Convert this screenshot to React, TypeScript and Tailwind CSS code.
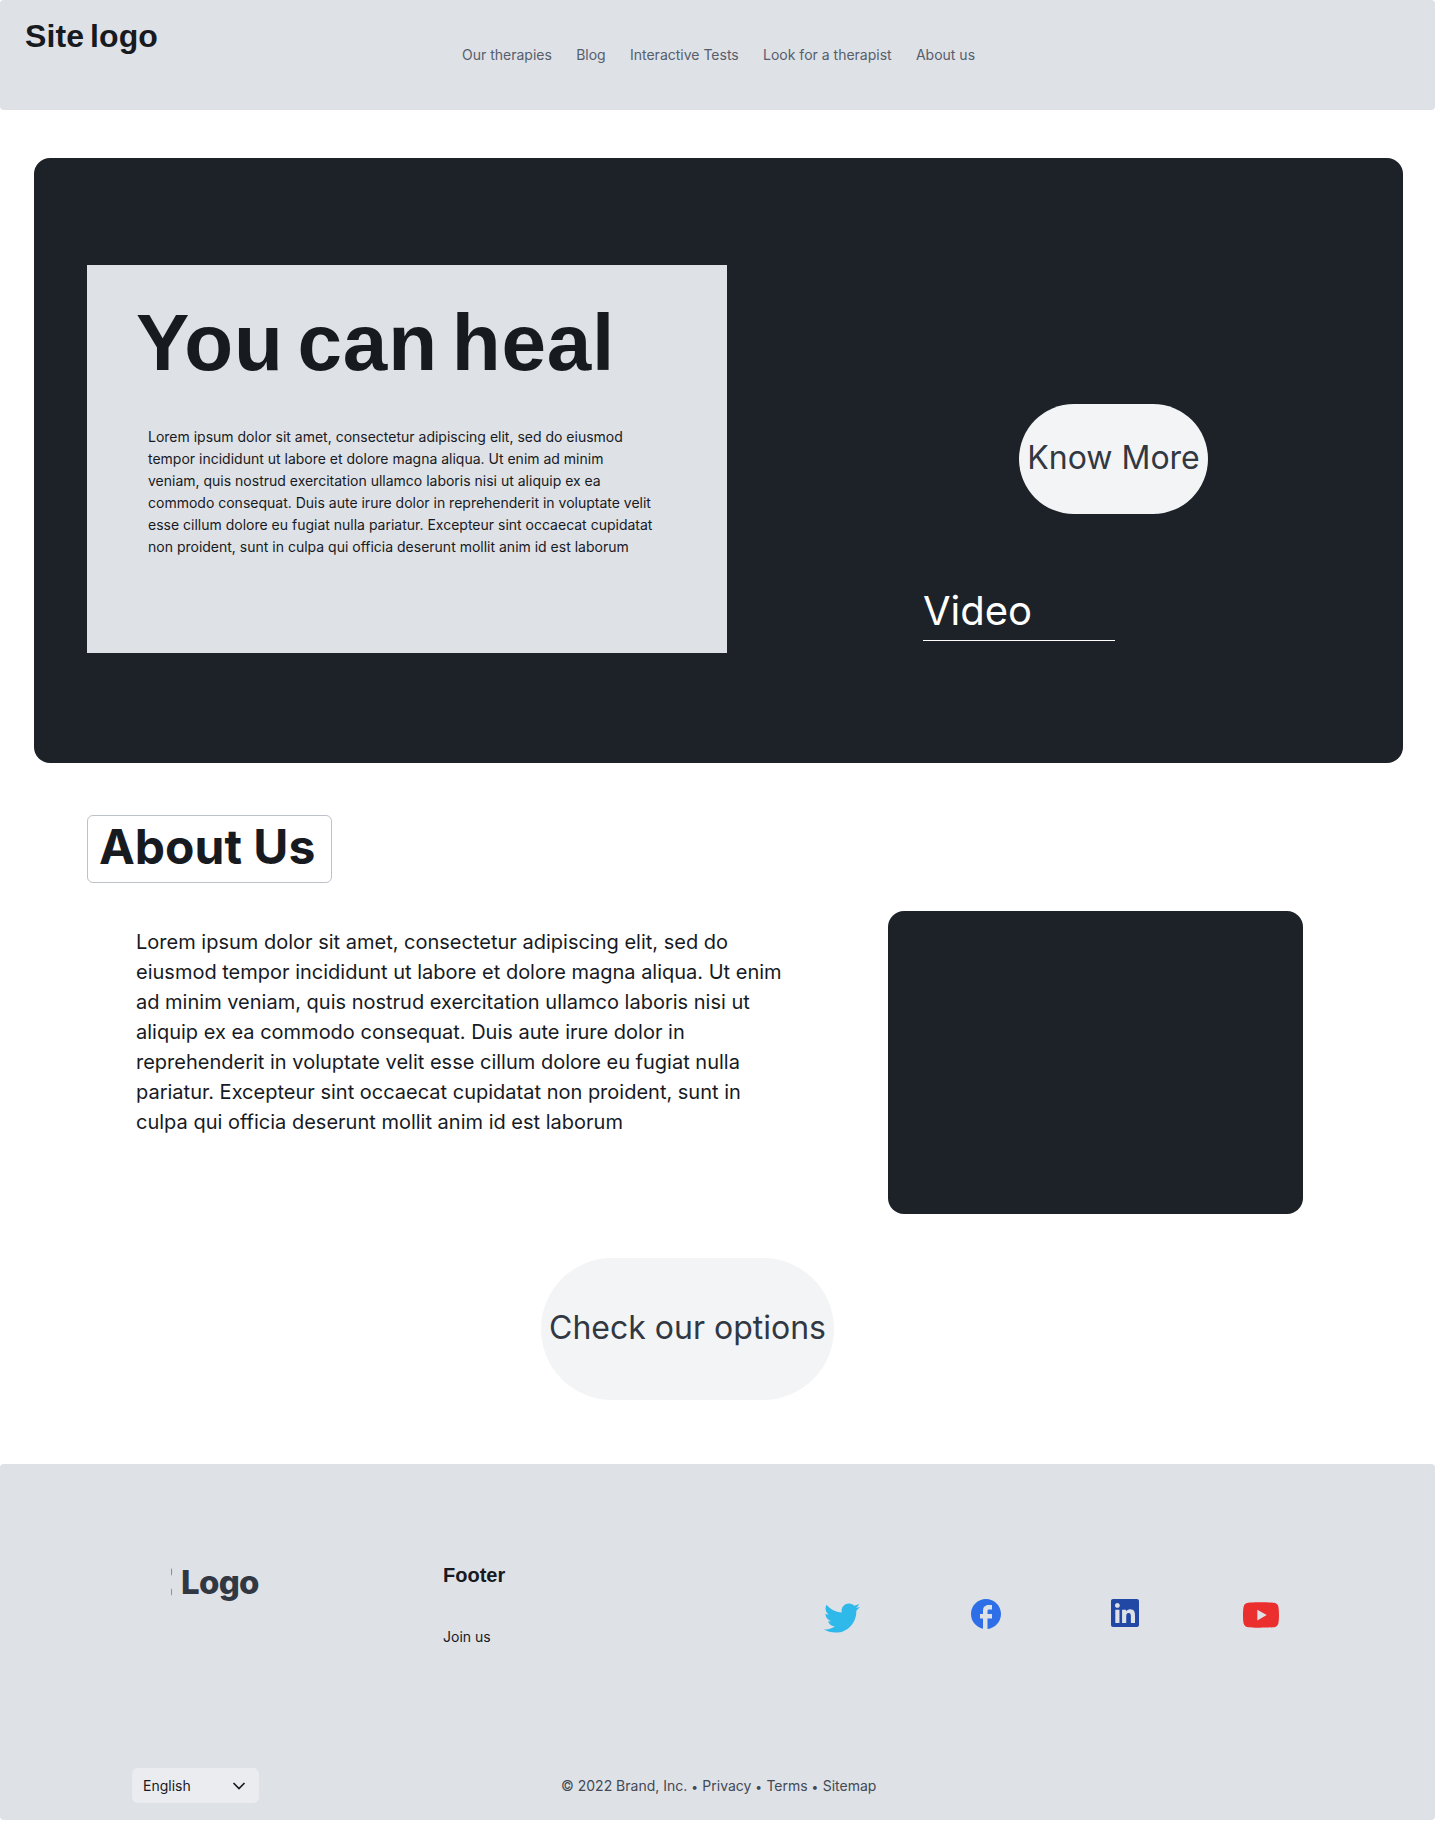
import React from "react";
import { FaTwitter, FaLinkedin, FaYoutube } from "react-icons/fa";
import { MdFacebook } from "react-icons/md";

const navItems = ["Our therapies", "Blog", "Interactive Tests", "Look for a therapist", "About us"];
const legalItems = ["Privacy", "Terms", "Sitemap"];

function Header() {
  return (
    <header className="flex h-[110px] rounded bg-[#dee1e6]">
      <h1 className="ml-[25px] mt-[12px] w-[437px] whitespace-nowrap font-['Liberation_Sans'] text-[32px] font-bold leading-[48px] tracking-[0.15px] [word-spacing:-3.4px]">
        Site logo
      </h1>
      <nav className="mt-[44px] flex gap-[24.3px] whitespace-nowrap text-sm leading-[22px] text-[#565e6c]">
        {navItems.map((item) => (
          <a key={item}>{item}</a>
        ))}
      </nav>
    </header>
  );
}

function Hero() {
  return (
    <section className="ml-[34px] mt-12 flex h-[605px] w-[1369px] rounded-2xl bg-[#1d2228]">
      <div className="ml-[53px] mt-[107px] h-[388px] w-[640px] bg-[#dee1e6]">
        <h2 className="ml-[49px] mt-[22px] whitespace-nowrap font-['Liberation_Sans'] text-[80px] font-bold leading-[112px] tracking-[0.8px] [word-spacing:-9px]">
          You can heal
        </h2>
        <p className="ml-[61px] mt-[27px] w-[510px] text-sm leading-[22px]">
          Lorem ipsum dolor sit amet, consectetur adipiscing elit, sed do eiusmod tempor incididunt ut labore et dolore
          magna aliqua. Ut enim ad minim veniam, quis nostrud exercitation ullamco laboris nisi ut aliquip ex ea commodo
          consequat. Duis aute irure dolor in reprehenderit in voluptate velit esse cillum dolore eu fugiat nulla
          pariatur. Excepteur sint occaecat cupidatat non proident, sunt in culpa qui officia deserunt mollit anim id
          est laborum
        </p>
      </div>
      <div className="ml-[196px] mt-[246px] flex flex-col">
        <button className="ml-24 h-[110px] w-[189px] whitespace-nowrap rounded-full bg-[#f3f4f6] pb-0.5 text-[32px] leading-[48px] text-[#323842]">
          Know More
        </button>
        <div className="mt-[67px] h-[60px] w-48 border-b border-white text-[40px] leading-[60px] text-white">Video</div>
      </div>
    </section>
  );
}

function About() {
  return (
    <section className="ml-[87px] mt-[52px]">
      <h2 className="h-[68px] w-[245px] whitespace-nowrap rounded-md border border-[#bcc1ca] pl-[11px] text-[48px] font-bold leading-[61px]">
        About Us
      </h2>
      <div className="mt-7 flex">
        <p className="ml-[49px] mt-4 w-[656px] text-xl leading-[30px]">
          Lorem ipsum dolor sit amet, consectetur adipiscing elit, sed do eiusmod tempor incididunt ut labore et dolore
          magna aliqua. Ut enim ad minim veniam, quis nostrud exercitation ullamco laboris nisi ut aliquip ex ea commodo
          consequat. Duis aute irure dolor in reprehenderit in voluptate velit esse cillum dolore eu fugiat nulla
          pariatur. Excepteur sint occaecat cupidatat non proident, sunt in culpa qui officia deserunt mollit anim id
          est laborum
        </p>
        <div className="ml-24 h-[303px] w-[415px] rounded-2xl bg-[#1d2228]" />
      </div>
      <button className="ml-[454px] mt-11 block h-[142px] w-[293px] whitespace-nowrap rounded-full bg-[#f3f4f6] pb-0.5 text-[32px] leading-[48px] text-[#323842]">
        Check our options
      </button>
    </section>
  );
}

function Footer() {
  return (
    <footer className="mt-16 flex h-[356px] flex-col rounded bg-[#dee1e6]">
      <div className="flex h-[304px]">
        <div className="ml-[171px] mt-[104px] flex h-[28px] w-[272px]">
          <svg className="h-7 w-[3px]" viewBox="0 0 3 28">
            <ellipse cx="0.4" cy="3.8" rx="0.7" ry="3.6" fill="#e8618c" />
            <ellipse cx="0.4" cy="24" rx="0.7" ry="3.6" fill="#22ccb2" />
          </svg>
          <span className="ml-[7px] -mt-1 whitespace-nowrap text-[33px] font-extrabold leading-[36px] tracking-[-0.7px] text-[#323842]">
            Logo
          </span>
        </div>
        <div className="mt-[96px] w-[381px]">
          <h3 className="font-['Liberation_Sans'] text-xl font-bold leading-[30px]">Footer</h3>
          <a className="mt-[36px] block text-sm leading-[22px]">Join us</a>
        </div>
        <div className="mt-[132px] flex items-start">
          <FaTwitter className="mt-[4px] size-9 text-[#2fb9ea]" />
          <MdFacebook className="ml-[108px] size-9 text-[#2e6fe8]" />
          <FaLinkedin className="ml-[105px] mt-px size-8 text-[#2148a5]" />
          <FaYoutube className="ml-[101px] size-[38px] text-[#eb2f2f]" />
        </div>
      </div>
      <div className="flex text-sm leading-[22px]">
        <div className="ml-[132px] flex h-[35px] w-[127px] items-center justify-between rounded-md bg-[#ebecf0] pl-[11px] pr-[13px]">
          English
          <svg className="h-4 w-[14px]" viewBox="0 0 14 16" fill="none" stroke="#171a1f" strokeWidth="1.7">
            <path d="M1.5 5 7 10.5 12.5 5" />
          </svg>
        </div>
        <p className="ml-[302px] mt-[7px] whitespace-nowrap text-[#424955]">
          © 2022 Brand, Inc.
          {legalItems.map((item) => (
            <React.Fragment key={item}>
              {" "}
              <span className="mr-[0.4px] text-[12px]">•</span> {item}
            </React.Fragment>
          ))}
        </p>
      </div>
    </footer>
  );
}

export default function App() {
  return (
    <div className="h-[1828px] w-[1435px] overflow-hidden bg-white font-['Inter',sans-serif] text-[#171a1f]">
      <Header />
      <Hero />
      <About />
      <Footer />
    </div>
  );
}
